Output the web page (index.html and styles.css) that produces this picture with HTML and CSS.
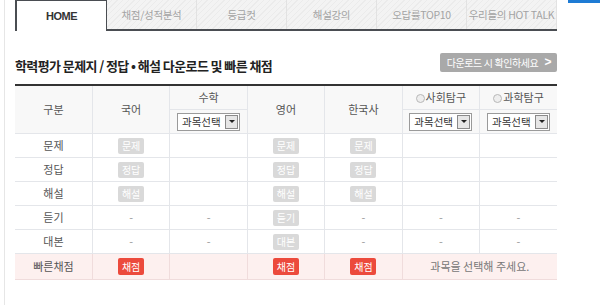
FILE: index.html
```html
<!DOCTYPE html>
<html>
<head>
	<title>학력평가 빠른 채점</title>
	<meta charset="utf-8">
	<link rel="stylesheet" href="styles.css">
</head>
<body>
	<div class="side"></div>
	<div class="topbar"></div>
	<div class="wrap">
		<ul class="tabs">
			<li class="on"><a href="#">HOME</a></li>
			<li><a href="#">채점/성적분석</a></li>
			<li><a href="#">등급컷</a></li>
			<li><a href="#">해설강의</a></li>
			<li><a href="#">오답률TOP10</a></li>
			<li><a href="#">우리들의 HOT TALK</a></li>
		</ul>
		<div class="head">
			<h2>학력평가 문제지 / 정답 • 해설 다운로드 및 빠른 채점</h2>
			<a class="notice" href="#">다운로드 시 확인하세요 <span>&gt;</span></a>
		</div>
		<table class="score">
			<colgroup>
				<col><col><col><col><col><col><col>
			</colgroup>
			<thead>
				<tr>
					<th rowspan="2">구분</th>
					<th rowspan="2">국어</th>
					<th>수학</th>
					<th rowspan="2">영어</th>
					<th rowspan="2">한국사</th>
					<th><i class="radio"></i>사회탐구</th>
					<th><i class="radio"></i>과학탐구</th>
				</tr>
				<tr>
					<th class="sel"><span class="select">과목선택<b></b></span></th>
					<th class="sel"><span class="select">과목선택<b></b></span></th>
					<th class="sel"><span class="select">과목선택<b></b></span></th>
				</tr>
			</thead>
			<tbody>
				<tr>
					<th>문제</th>
					<td><a class="btn" href="#">문제</a></td>
					<td></td>
					<td><a class="btn" href="#">문제</a></td>
					<td><a class="btn" href="#">문제</a></td>
					<td></td>
					<td></td>
				</tr>
				<tr>
					<th>정답</th>
					<td><a class="btn" href="#">정답</a></td>
					<td></td>
					<td><a class="btn" href="#">정답</a></td>
					<td><a class="btn" href="#">정답</a></td>
					<td></td>
					<td></td>
				</tr>
				<tr>
					<th>해설</th>
					<td><a class="btn" href="#">해설</a></td>
					<td></td>
					<td><a class="btn" href="#">해설</a></td>
					<td><a class="btn" href="#">해설</a></td>
					<td></td>
					<td></td>
				</tr>
				<tr>
					<th>듣기</th>
					<td>-</td>
					<td>-</td>
					<td><a class="btn" href="#">듣기</a></td>
					<td>-</td>
					<td>-</td>
					<td>-</td>
				</tr>
				<tr>
					<th>대본</th>
					<td>-</td>
					<td>-</td>
					<td><a class="btn" href="#">대본</a></td>
					<td>-</td>
					<td>-</td>
					<td>-</td>
				</tr>
				<tr class="quick">
					<th>빠른채점</th>
					<td><a class="btn red" href="#">채점</a></td>
					<td></td>
					<td><a class="btn red" href="#">채점</a></td>
					<td><a class="btn red" href="#">채점</a></td>
					<td colspan="2" class="msg">과목을 선택해 주세요.</td>
				</tr>
			</tbody>
		</table>
	</div>
</body>
</html>
```

FILE: styles.css
```css
*{
	margin:0;
	padding:0;
	list-style:none;
	text-decoration:none;
	box-sizing:border-box;
}
body{
	background:#fff;
	font-family:"Noto Sans CJK KR","Liberation Sans",sans-serif;
	font-size:11px;
	color:#555;
	position:relative;
	height:305px;
	overflow:hidden;
}
.side{
	position:absolute;
	left:4px;
	top:0;
	width:1px;
	height:305px;
	background:#e6e6e6;
}
.topbar{
	position:absolute;
	right:0;
	top:0;
	width:32px;
	height:3px;
	background:#1e7bd4;
}
.wrap{
	width:542px;
	margin-left:15px;
}
/* 탭 */
.tabs{
	display:flex;
	height:31px;
	border-bottom:2px solid #4a4d52;
}
.tabs li{
	width:90px;
	background:repeating-linear-gradient(135deg,#f3f3f3 0 3px,#ebebeb 3px 4px);
	border-right:1px solid #e2e2e2;
}
.tabs li a{
	display:flex;
	align-items:center;
	justify-content:center;
	height:100%;
	color:#a3a3a3;
	font-size:10.5px;
	white-space:nowrap;
	letter-spacing:-0.3px;
}
.tabs li.on{
	width:92px;
	background:#fff;
	border:1px solid #4a4d52;
	border-bottom:none;
	border-left-width:2px;
	margin-bottom:-2px;
	height:31px;
}
.tabs li.on a{
	color:#333;
	font-weight:bold;
	font-family:"Liberation Sans",sans-serif;
	font-size:11px;
	letter-spacing:-0.5px;
}
/* 제목 */
.head{
	display:flex;
	justify-content:space-between;
	align-items:center;
	height:53px;
	padding-top:9px;
}
.head h2{
	font-size:13px;
	color:#222;
	letter-spacing:-0.6px;
	font-weight:bold;
	margin-top:7px;
}
.notice{
	display:flex;
	align-items:center;
	gap:6px;
	height:19px;
	padding:0 6px 0 7px;
	background:#a9a9a9;
	color:#fff;
	border-radius:2px;
	font-size:10px;
	letter-spacing:-0.4px;
}
.notice span{
	font-weight:bold;
	font-family:"Liberation Sans",sans-serif;
	font-size:12px;
}
/* 표 */
.score{
	width:542px;
	table-layout:fixed;
	border-collapse:collapse;
	border-top:2px solid #333;
}
.score th,
.score td{
	text-align:center;
	font-weight:normal;
	border:1px solid #e4e6ea;
	height:24px;
	color:#555;
	font-size:11px;
}
.score tr > :first-child{
	border-left:none;
}
.score tr > :last-child{
	border-right:none;
}
.score thead th{
	background:#f8f8f8;
	height:24px;
}
.score td{
	color:#999;
}
.radio{
	display:inline-block;
	width:9px;
	height:9px;
	border:1px solid #b8b8b8;
	border-radius:50%;
	background:#eee;
	margin-right:1px;
	vertical-align:-1px;
}
.select{
	display:inline-flex;
	align-items:center;
	justify-content:space-between;
	width:63px;
	height:18px;
	border:1px solid #9a9a9a;
	background:#fff;
	color:#333;
	font-size:10.5px;
	padding-left:4px;
	vertical-align:middle;
}
.select b{
	display:flex;
	align-items:center;
	justify-content:center;
	width:13px;
	height:14px;
	margin-right:1px;
	border:1px solid #8a8a8a;
	background:#e6e6e6;
}
.select b::after{
	content:'';
	border-left:3px solid transparent;
	border-right:3px solid transparent;
	border-top:3px solid #222;
}
.btn{
	display:inline-block;
	width:26px;
	height:16px;
	line-height:16px;
	background:#d9d9d9;
	color:#fff;
	border-radius:2px;
	font-size:10px;
	vertical-align:middle;
}
.btn.red{
	background:#ec4a3c;
	height:17px;
	line-height:17px;
}
.quick th,
.quick td{
	background:#fdf0ef;
	height:26px;
	border-color:#f0dcdc;
}
.quick .msg{
	color:#777;
}
```
